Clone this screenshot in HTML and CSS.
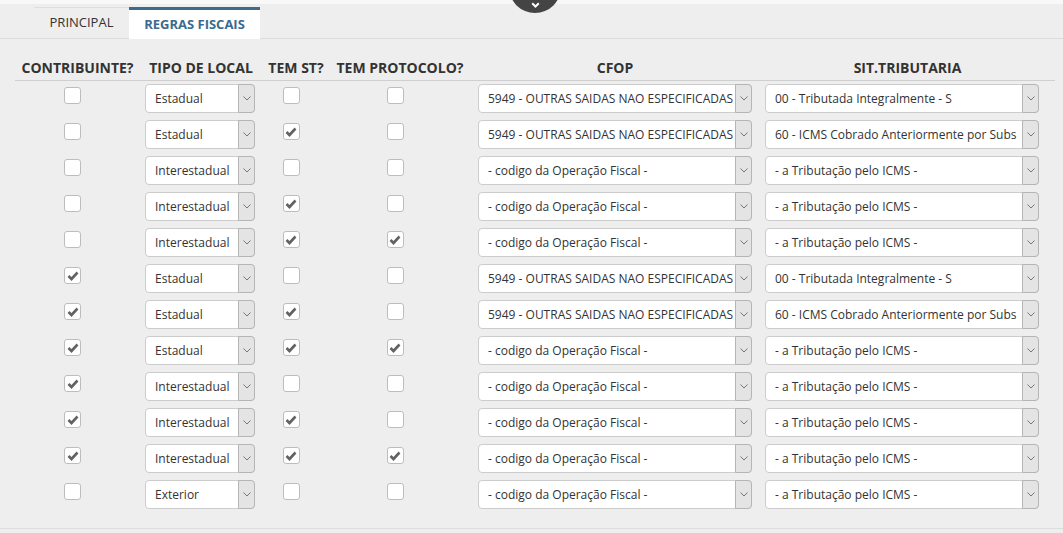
FILE: index.html
```html
<!DOCTYPE html>
<html lang="pt-BR">
<head>
  <meta charset="UTF-8" />
  <title>Regras Fiscais</title>
  <link rel="stylesheet" href="styles.css">
</head>
<body>
  <div class="topbar"></div>
  <div class="toggle">
    <svg width="9" height="6" viewBox="0 0 9 6"><path d="M1.2 1.2 L4.5 4.5 L7.8 1.2" fill="none" stroke="#fff" stroke-width="2"/></svg>
  </div>
  <div class="tabs">
    <div class="tab">PRINCIPAL</div>
    <div class="tab active">REGRAS FISCAIS</div>
  </div>

  <div class="rules">
    <div class="row head">
      <div>CONTRIBUINTE?</div>
      <div>TIPO DE LOCAL</div>
      <div>TEM ST?</div>
      <div>TEM PROTOCOLO?</div>
      <div>CFOP</div>
      <div>SIT.TRIBUTARIA</div>
    </div>
  </div>

  <div class="footer-line"></div>

  <script>
    var rows = [
      [0, 'Estadual', 0, 0, '5949 - OUTRAS SAIDAS NAO ESPECIFICADAS', '00 - Tributada Integralmente - S'],
      [0, 'Estadual', 1, 0, '5949 - OUTRAS SAIDAS NAO ESPECIFICADAS', '60 - ICMS Cobrado Anteriormente por Subs'],
      [0, 'Interestadual', 0, 0, '', ''],
      [0, 'Interestadual', 1, 0, '', ''],
      [0, 'Interestadual', 1, 1, '', ''],
      [1, 'Estadual', 0, 0, '5949 - OUTRAS SAIDAS NAO ESPECIFICADAS', '00 - Tributada Integralmente - S'],
      [1, 'Estadual', 1, 0, '5949 - OUTRAS SAIDAS NAO ESPECIFICADAS', '60 - ICMS Cobrado Anteriormente por Subs'],
      [1, 'Estadual', 1, 1, '', ''],
      [1, 'Interestadual', 0, 0, '', ''],
      [1, 'Interestadual', 1, 0, '', ''],
      [1, 'Interestadual', 1, 1, '', ''],
      [0, 'Exterior', 0, 0, '', '']
    ];

    var tick = '<svg width="12" height="10" viewBox="0 0 12 10"><path d="M1.5 5 L4.5 8 L10.5 1.5" fill="none" stroke="#626262" stroke-width="2.6"/></svg>';
    var chevron = '<svg width="8" height="5" viewBox="0 0 8 5"><path d="M0.5 0.5 L4 4 L7.5 0.5" fill="none" stroke="#777" stroke-width="1"/></svg>';

    function check(on) {
      return '<div class="cell center"><span class="check">' + (on ? tick : '') + '</span></div>';
    }

    function select(value, cls) {
      return '<div class="select ' + cls + '"><span class="value">' + value + '</span><span class="arrow">' + chevron + '</span></div>';
    }

    var html = '';
    rows.forEach(function (r) {
      html += '<div class="row">' +
        check(r[0]) +
        '<div class="cell">' + select(r[1], 'small') + '</div>' +
        check(r[2]) +
        check(r[3]) +
        '<div class="cell center">' + select(r[4] || '- codigo da Operação Fiscal -', 'wide') + '</div>' +
        '<div class="cell">' + select(r[5] || '- a Tributação pelo ICMS -', 'wide') + '</div>' +
        '</div>';
    });
    document.querySelector('.rules').insertAdjacentHTML('beforeend', html);
  </script>
</body>
</html>
```

FILE: styles.css
```css
body {
  margin: 0;
  font-family: "Open Sans", sans-serif;
  font-size: 13px;
  color: #333;
  background: #eeeeee;
  position: relative;
  overflow: hidden;
}
.topbar {
  height: 4px;
  background: #f8f8f8;
}
.toggle {
  position: absolute;
  top: -39px;
  left: 509px;
  width: 52px;
  height: 52px;
  border-radius: 50%;
  background: #444;
  display: flex;
  justify-content: center;
  align-items: flex-end;
  padding-bottom: 5px;
  box-sizing: border-box;
  z-index: 2;
}
.tabs {
  display: flex;
  height: 34px;
  padding-left: 34px;
  border-bottom: 1px solid #dcdcdc;
}
.tab {
  width: 95px;
  margin-top: 3px;
  border-top: 1px solid #dddddd;
  line-height: 29px;
  text-align: center;
  color: #333;
}
.tab.active {
  width: 131px;
  margin-bottom: -1px;
  border-top: 3px solid #3c6b90;
  background: #fff;
  line-height: 28px;
  font-weight: bold;
  color: #3a6a8f;
}
.rules {
  width: 1040px;
  margin: 16px 0 0 15px;
}
.row {
  display: grid;
  grid-template-columns: 125px 122px 68px 140px 290px 295px;
  height: 36px;
}
.row.head {
  height: 25px;
  line-height: 25px;
  border-bottom: 1px solid #cfcfcf;
  font-size: 14px;
  font-weight: bold;
  text-align: center;
  color: #333;
}
.cell {
  padding: 3px 5px 0;
}
.cell.center {
  display: flex;
  justify-content: center;
}
.check {
  width: 15px;
  height: 15px;
  margin: 3px 10px 0 0;
  border: 1px solid #bdbdbd;
  border-radius: 3px;
  background: #fff;
  display: flex;
  align-items: center;
  justify-content: center;
}
.select {
  display: flex;
  height: 29px;
  box-sizing: border-box;
  border: 1px solid #cccccc;
  border-radius: 4px;
  background: #fff;
}
.select.small {
  width: 110px;
}
.select.wide {
  width: 274px;
}
.value {
  flex: 1;
  overflow: hidden;
  white-space: nowrap;
  padding-left: 9px;
  line-height: 27px;
  font-size: 12px;
  color: #333;
}
.arrow {
  width: 15px;
  margin: -1px -1px -1px 0;
  border: 1px solid #b5b5b5;
  border-radius: 0 4px 4px 0;
  background: #e4e4e4;
  display: flex;
  align-items: center;
  justify-content: center;
}
.footer-line {
  margin-top: 15px;
  border-top: 1px solid #dddddd;
}
```
